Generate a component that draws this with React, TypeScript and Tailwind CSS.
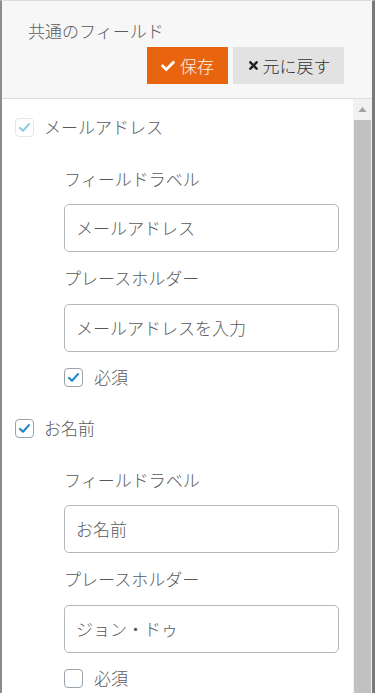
/** Common field settings panel with save / revert actions. */

import { FaCheck, FaTimes } from "react-icons/fa";

const font = { fontFamily: '"Noto Sans CJK JP", "Noto Sans", sans-serif' };

function CheckBox({ checked, disabled = false }: { checked: boolean; disabled?: boolean }) {
	return (
		<span
			className={`flex items-center justify-center w-[19px] h-[19px] rounded-[4px] bg-white border ${disabled ? "border-[#e6e6e6]" : "border-[#9aa3ab]"}`}
		>
			{checked && (
				<svg viewBox="0 0 16 16" className="w-[13px] h-[13px]">
					<path
						d="M2.5 8.5 L6.2 12 L13.5 3.8"
						fill="none"
						stroke={disabled ? "#8fcbe6" : "#1b87c6"}
						strokeWidth="2.6"
						strokeLinecap="round"
						strokeLinejoin="round"
					/>
				</svg>
			)}
		</span>
	);
}

function FieldSection({ title, enabled, disabled, label, placeholder, required }: {
	title: string, enabled: boolean, disabled?: boolean, label: string, placeholder: string, required: boolean
}) {
	return (
		<div className="flex flex-col">
			<div className="flex items-center h-6 gap-[10px]">
				<CheckBox checked={enabled} disabled={disabled} />
				<span className="leading-6">{title}</span>
			</div>
			<div className="flex flex-col ml-[49px]">
				<div className="mt-[28px] leading-6">フィールドラベル</div>
				<div className="mt-[13px] h-[48px] flex items-center px-[11px] border border-[#b3b8bd] rounded-[5px] bg-white">{label}</div>
				<div className="mt-[14px] leading-6">プレースホルダー</div>
				<div className="mt-[14px] h-[48px] flex items-center px-[11px] border border-[#b3b8bd] rounded-[5px] bg-white">{placeholder}</div>
				<div className="mt-[13px] flex items-center h-6 gap-[11px]">
					<CheckBox checked={required} />
					<span className="leading-6">必須</span>
				</div>
			</div>
		</div>
	);
}

export default function App() {
	return (
		<div className="w-[375px] h-[693px] overflow-hidden flex flex-col bg-white border-t border-t-[#dcdcdc] border-l-2 border-l-[#8c8c8c] border-r-[3px] border-r-[#7a7a7a] text-[17px] text-[#5a5a5a] font-light" style={font}>
			<div className="flex flex-col bg-[#f7f7f7] border-b border-b-[#dddddd] pt-[18px] pb-[14px] pl-[26px] pr-[28px]">
				<div className="leading-6">共通のフィールド</div>
				<div className="flex justify-end gap-[5px] mt-[4px]">
					<button className="flex items-center gap-[5px] h-[37px] w-[81px] justify-center bg-[#e8640e] text-[#fff3ea] text-[17px] font-light">
						<FaCheck className="w-[14px] h-[14px] text-white" />
						<span>保存</span>
					</button>
					<button className="flex items-center gap-[3px] h-[37px] w-[111px] justify-center bg-[#e2e2e2] text-[#333] text-[17px] font-light">
						<FaTimes className="w-[13px] h-[13px] text-[#222]" />
						<span>元に戻す</span>
					</button>
				</div>
			</div>
			<div className="flex flex-1 min-h-0">
				<div className="flex-1 flex flex-col pt-[16px] pl-[13px] pr-[14px] overflow-hidden">
					<FieldSection title="メールアドレス" enabled disabled label="メールアドレス" placeholder="メールアドレスを入力" required />
					<div className="mt-[27px]">
						<FieldSection title="お名前" enabled label="お名前" placeholder="ジョン・ドゥ" required={false} />
					</div>
				</div>
				<div className="w-[19px] flex flex-col bg-[#f1f1f1] pl-[1px] pr-[1px]">
					<div className="h-[21px] flex items-center justify-center">
						<svg viewBox="0 0 10 6" className="w-[9px] h-[5px]">
							<path d="M0 6 L5 0 L10 6 Z" fill="#a3a3a3" />
						</svg>
					</div>
					<div className="flex-1 bg-[#c1c1c1]" />
				</div>
			</div>
		</div>
	);
}
